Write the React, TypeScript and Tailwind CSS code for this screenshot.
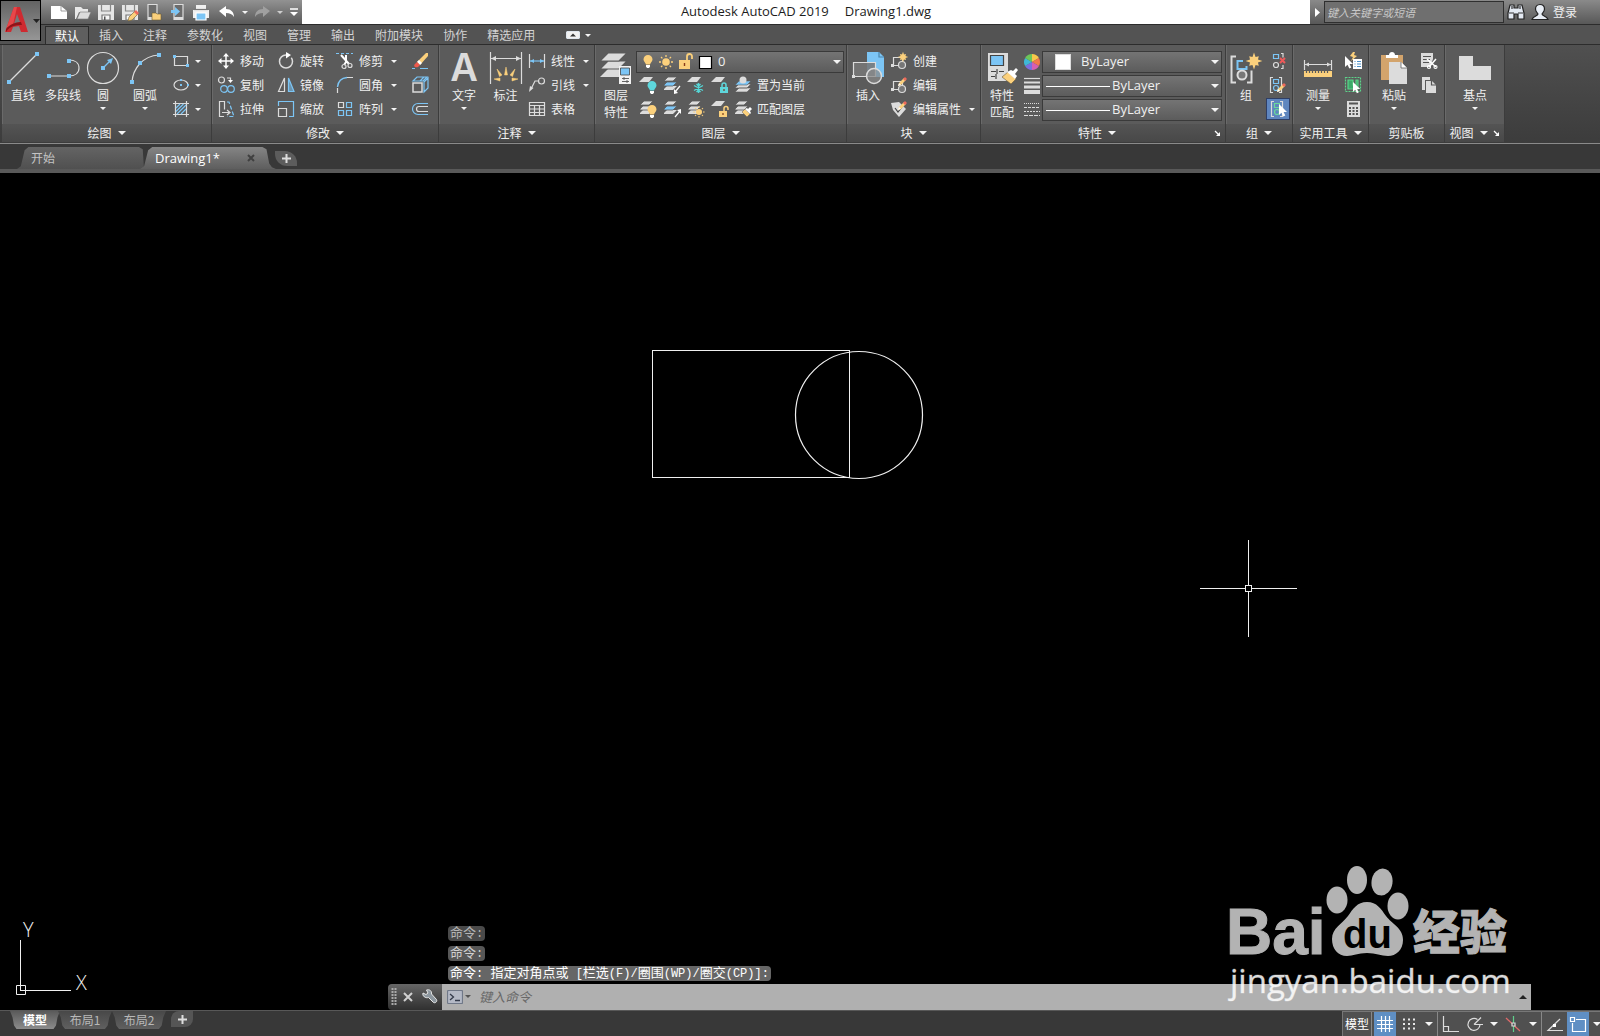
import React from 'react';

/* ---------- icon atoms ---------- */
const G = '#dcdcdc';
const B = '#7cc5f5';
const Y = '#fbd07c';

interface IcProps {
  w?: number;
  h?: number;
  children: React.ReactNode;
}

const Ic = ({ w = 20, h = 20, children }: IcProps) => (
  <svg
    width={w}
    height={h}
    viewBox={`0 0 ${w} ${h}`}
    fill="none"
    stroke={G}
    strokeWidth="1.2"
    className="block shrink-0"
    aria-hidden="true"
  >
    {children}
  </svg>
);

const Caret = ({ big = false }: { big?: boolean }) => (
  <svg
    width={big ? 8 : 6}
    height={big ? 4 : 3}
    viewBox="0 0 8 4"
    className="block shrink-0"
    fill="#f4f4f4"
    aria-hidden="true"
  >
    <path d="M0 0h8L4 4z" />
  </svg>
);

const Sheets = ({ blue = false, x = 0, y = 0 }: { blue?: boolean; x?: number; y?: number }) => (
  <g transform={`translate(${x} ${y})`} stroke="none">
    <path d="M2 13l3-3h10l-4 4H2z" fill={G} />
    <path d="M2 9l3-3h10l-4 4H2z" fill={blue ? B : G} stroke="#5b5b5b" strokeWidth=".8" />
    <path d="M2 5l4-4h9l-4 4H2z" fill={G} stroke="#5b5b5b" strokeWidth=".8" />
  </g>
);

const Sheet = () => <path d="M1 7l5-5h9l-4 5z" fill={G} stroke="none" />;

const Star = ({ x, y, s = 1 }: { x: number; y: number; s?: number }) => (
  <path
    transform={`translate(${x} ${y}) scale(${s})`}
    d="M0-7l1.300 3.700L4-4 3.300-1.300 7 0 3.300 1.300 4 4 1.300 3.300 0 7l-1.300-3.700L-4 4l.7-2.700L-7 0l3.700-1.300L-4-4l2.700.7z"
    fill={Y}
    stroke="none"
  />
);

const Pencil = ({ x, y }: { x: number; y: number }) => (
  <g transform={`translate(${x} ${y})`} stroke="none">
    <path d="M0 9l1-3 5-5 2 2-5 5z" fill={Y} />
    <path d="M5 2l2-2 2 2-2 2z" fill="#ee6a5c" />
    <path d="M0 9l1-3 2 2z" fill="#fff" />
  </g>
);

const Cursor = ({ x, y, s = 1 }: { x: number; y: number; s?: number }) => (
  <path
    transform={`translate(${x} ${y}) scale(${s})`}
    d="M0 0v11l2.500-2.300L4.300 12.500l2-.9-1.700-3.700H8z"
    fill="#fff"
    stroke="none"
  />
);

const Bulb = ({ x, y, c = Y }: { x: number; y: number; c?: string }) => (
  <g transform={`translate(${x} ${y})`} stroke="none">
    <path d="M0-5a4.500 4.500 0 0 1 4.500 4.500C4.500 1.500 2.500 2.500 2 4.500h-4C-2.500 2.500-4.500 1.500-4.500-.5A4.500 4.500 0 0 1 0-5z" fill={c} />
    <path d="M-2 5h4v1.500L1 8h-2l-1-1.500z" fill="#fff" />
  </g>
);

const Sun = ({ x, y, s = 1 }: { x: number; y: number; s?: number }) => (
  <g transform={`translate(${x} ${y}) scale(${s})`}>
    <circle r="3.800" fill={Y} stroke="none" />
    <path
      d="M0-7v2M0 5v2M-7 0h2M5 0h2M-5-5l1.400 1.400M3.600 3.600L5 5M-5 5l1.400-1.400M3.600-3.600L5-5"
      stroke={Y}
      strokeWidth="1.300"
    />
  </g>
);

const Lock = ({ x, y, c = Y, open = false }: { x: number; y: number; c?: string; open?: boolean }) => (
  <g transform={`translate(${x} ${y})`}>
    <path d="M0 4h8v6H0z" fill={c} stroke="none" />
    <path d={open ? 'M5 4V1.500a2 2 0 0 1 4 0V3' : 'M2 4V2a2 2 0 0 1 4 0v2'} stroke={c} strokeWidth="1.500" />
    <path d="M4 6v2" stroke="#7a3b1c" />
  </g>
);

/* ---------- ribbon atoms ---------- */
const Small = ({
  icon,
  label,
  caret,
  title,
}: {
  icon: React.ReactNode;
  label?: string;
  caret?: boolean;
  title?: string;
}) => (
  <button type="button" aria-label={label ?? title} className="flex h-6 items-center gap-1 whitespace-nowrap">
    {icon}
    {label && <span>{label}</span>}
    {caret && (
      <span className={label ? 'ml-1' : ''}>
        <Caret />
      </span>
    )}
  </button>
);

const Big = ({
  icon,
  lines,
  caret,
  width = 'w-10',
}: {
  icon: React.ReactNode;
  lines: string[];
  caret?: boolean;
  width?: string;
}) => (
  <button type="button" className={`flex shrink-0 flex-col items-center ${width}`}>
    <span className="flex h-[37px] items-center">{icon}</span>
    {lines.map((l) => (
      <span key={l} className="block leading-[17px] whitespace-nowrap">
        {l}
      </span>
    ))}
    {caret && (
      <span className="mt-1">
        <Caret />
      </span>
    )}
  </button>
);

const Panel = ({
  title,
  width,
  caret = true,
  launcher,
  children,
}: {
  title: string;
  width: string;
  caret?: boolean;
  launcher?: boolean;
  children: React.ReactNode;
}) => (
  <section
    className={`flex shrink-0 flex-col border-r border-[#3c3c3c] bg-[#5b5b5b] shadow-[inset_1px_0_0_#6a6a6a] ${width}`}
  >
    <div className="flex h-[79px] pt-1">{children}</div>
    <div
      className={`relative flex h-[18px] items-center justify-center gap-[6px] bg-linear-to-b from-[#545454] to-[#484848] ${
        launcher ? 'pr-3' : ''
      }`}
    >
      <span>{title}</span>
      {caret && <Caret big />}
      {launcher && (
        <button type="button" aria-label="对话框" className="absolute right-1">
          <Ic w={7} h={7}>
            <path d="M1 1l4 4" stroke="#fff" />
            <path d="M6 2v4H2z" fill="#fff" stroke="none" />
          </Ic>
        </button>
      )}
    </div>
  </section>
);

const Combo = ({
  label,
  value,
  prefix,
  indent,
}: {
  label: string;
  value: string;
  prefix: React.ReactNode;
  indent: string;
}) => (
  <div className="flex h-[22px] w-full items-center border border-[#3a3a3a] bg-linear-to-b from-[#747474] to-[#5c5c5c] pr-[2px]">
    {prefix}
    <select
      aria-label={label}
      defaultValue={value}
      className={`h-full min-w-0 flex-1 appearance-none bg-transparent font-[Open_Sans] text-[13px] outline-none ${indent}`}
    >
      <option>{value}</option>
    </select>
    <Caret big />
  </div>
);

/* ---------- title bar ---------- */
const QUICK: { name: string; icon: React.ReactNode }[] = [
  {
    name: '新建',
    icon: (
      <Ic>
        <path d="M2 4h10l6 5v8H2z" fill="#fff" stroke="none" />
        <path d="M12 4v5h6" stroke="#888" strokeWidth=".8" />
      </Ic>
    ),
  },
  {
    name: '打开',
    icon: (
      <Ic>
        <path d="M2 5h6l2 2h5v3H6l-3 7H2z" fill="#e8e8e8" stroke="none" />
        <path d="M7 10h11l-3 7H4z" fill={G} stroke="#777" strokeWidth=".6" />
      </Ic>
    ),
  },
  {
    name: '保存',
    icon: (
      <Ic>
        <path d="M2 3h16v15H2z" fill="#e6e6e6" stroke="none" />
        <path d="M5.500 3v6h9V3" stroke="#888" />
        <path d="M6 13h8v5H6z" fill="#f6f6f6" stroke="#777" />
        <path d="M8 14.500h1.500V18H8z" fill="#555" stroke="none" />
      </Ic>
    ),
  },
  {
    name: '另存为',
    icon: (
      <Ic>
        <path d="M2 3h16v15H2z" fill="#e6e6e6" stroke="none" />
        <path d="M5.500 3v6h9V3" stroke="#888" />
        <path d="M6 13h8v5H6z" fill="#f6f6f6" stroke="#777" />
        <g stroke="none">
          <path d="M8 19l1-4 6-6 3 3-6 6z" fill={Y} stroke="#6b5a30" strokeWidth=".6" />
          <path d="M14 10l2-2 3 3-2 2z" fill="#ee6a5c" />
        </g>
      </Ic>
    ),
  },
  {
    name: '从移动设备打开',
    icon: (
      <Ic>
        <path d="M4 2.500h9v15H4z" fill="#6c6c6c" stroke="#ddd" />
        <path d="M4 15h9v3H4z" fill="#ddd" stroke="none" />
        <path d="M8 11h4l1 1h4v6H8z" fill={Y} stroke="#6b5a30" strokeWidth=".6" />
      </Ic>
    ),
  },
  {
    name: '保存到移动设备',
    icon: (
      <Ic>
        <path d="M7 2.500h9v15H7z" fill="#6c6c6c" stroke="#ddd" />
        <path d="M7 15h9v3H7z" fill="#ddd" stroke="none" />
        <path d="M4 8h4V5l5 4.500L8 14v-3H4z" fill={B} stroke="none" />
      </Ic>
    ),
  },
  {
    name: '打印',
    icon: (
      <Ic>
        <path d="M5 3h10v4H5zM2 8h16v8H2z" fill="#f0f0f0" stroke="none" />
        <path d="M5 11h10v7H5z" fill={B} stroke="#fff" />
        <path d="M3 7.500h14" stroke="#777" />
      </Ic>
    ),
  },
];

const TitleBar = () => (
  <div className="flex h-6 bg-white">
    <div className="flex w-[261px] shrink-0 items-center bg-linear-to-b from-[#929292] to-[#5a5a5a] pl-[6px]">
      {QUICK.map((q) => (
        <button key={q.name} type="button" aria-label={q.name} className="flex w-6 justify-center">
          {q.icon}
        </button>
      ))}
      <button type="button" aria-label="放弃" className="ml-[2px] flex w-6 justify-center">
        <Ic>
          <path d="M2 9l7-5v3c5 0 8 3 8 8-2-3-4-4-8-4v4z" fill="#fff" stroke="none" />
        </Ic>
      </button>
      <span className="flex w-3 justify-center">
        <Caret />
      </span>
      <button type="button" aria-label="重做" className="flex w-6 justify-center">
        <Ic>
          <path d="M18 9l-7-5v3c-5 0-8 3-8 8 2-3 4-4 8-4v4z" fill="#a0a0a0" stroke="none" />
        </Ic>
      </button>
      <span className="flex w-3 justify-center opacity-70">
        <Caret />
      </span>
      <button type="button" aria-label="自定义" className="flex w-4 justify-center">
        <Ic w={10} h={10}>
          <path d="M1 2h8" stroke="#fff" strokeWidth="1.500" />
          <path d="M1 5h8L5 9z" fill="#fff" stroke="none" />
        </Ic>
      </button>
    </div>
    <h1 className="flex flex-1 items-center justify-center gap-4 font-[Open_Sans] text-[13px] text-[#1c1c1c]">
      <span>Autodesk AutoCAD 2019</span>
      <span>Drawing1.dwg</span>
    </h1>
    <div className="flex w-[290px] shrink-0 items-center bg-linear-to-b from-[#8a8a8a] to-[#585858]">
      <span className="flex w-[14px] justify-center">
        <Ic w={5} h={9}>
          <path d="M0 0v9l5-4.500z" fill="#fff" stroke="none" />
        </Ic>
      </span>
      <input
        aria-label="搜索"
        placeholder="键入关键字或短语"
        className="h-[22px] w-[180px] border border-[#2f2f2f] bg-[#6f6f6f] px-[2px] text-[11px] italic outline-none placeholder:text-[#c8c8c8]"
      />
      <button type="button" aria-label="查找" className="ml-[3px] flex">
        <Ic w={18} h={18}>
          <path d="M3 2h4v3h4V2h4l2 8v6h-6v-5H7v5H1v-6z" fill="#e3e9f2" stroke="#222" />
          <path d="M2 10h5M11 10h5M5 3v3M13 3v3" stroke="#333" />
        </Ic>
      </button>
      <button type="button" className="ml-[6px] flex items-center gap-1">
        <Ic w={18} h={18}>
          <path
            d="M9 1.500c3 0 4.500 2 4.500 4.500S12 9.500 11 11c0 2 5 2 6 5.500H1C2 13 7 13 7 11 6 9.500 4.500 8.500 4.500 6S6 1.500 9 1.500z"
            fill="#e8edf5"
            stroke="#222"
          />
        </Ic>
        <span>登录</span>
      </button>
    </div>
  </div>
);

const MENUS = ['默认', '插入', '注释', '参数化', '视图', '管理', '输出', '附加模块', '协作', '精选应用'];

const MenuTabs = () => (
  <nav className="flex h-5 items-end border-t border-[#2c2c2c] bg-[#535353] pl-1">
    {MENUS.map((m, i) => (
      <button
        key={m}
        type="button"
        className={
          i === 0
            ? 'h-[18px] border border-b-0 border-[#2c2c2c] bg-[#5f5f5f] px-[9px] leading-[16px] text-white'
            : 'h-[18px] px-[10px] leading-[16px] text-[#d4d4d4]'
        }
      >
        {m}
      </button>
    ))}
    <button type="button" aria-label="最小化功能区" className="ml-[21px] flex h-[18px] items-center gap-[5px]">
      <Ic w={14} h={8}>
        <rect x=".5" y=".5" width="13" height="7" rx="1.500" fill="#f2f2f2" stroke="#dfe6ee" />
        <path d="M4 5.500h6L7 2.500z" fill="#333" stroke="none" />
      </Ic>
      <Caret />
    </button>
  </nav>
);

/* ---------- ribbon ---------- */
const DrawPanel = () => (
  <Panel title="绘图" width="w-[210px]">
    <Big
      lines={['直线']}
      width="ml-px w-10"
      icon={
        <Ic w={34} h={34}>
          <path d="M3 31L31 3" />
          <path d="M1 29h4v4H1zM29 1h4v4h-4z" fill={B} stroke="none" />
        </Ic>
      }
    />
    <Big
      lines={['多段线']}
      icon={
        <Ic w={34} h={34}>
          <path d="M3 25h20M23 9c6 0 10 3 10 8s-4 8-10 8" />
          <path d="M1 23h4v4H1zM21 23h4v4h-4zM21 8h4v4h-4z" fill={B} stroke="none" />
        </Ic>
      }
    />
    <Big
      lines={['圆']}
      caret
      icon={
        <Ic w={34} h={34}>
          <circle cx="17" cy="17" r="15.500" />
          <path d="M17 17l8-8" stroke={B} />
          <path d="M15 15h4v4h-4zM27 7l-2 6-4-4z" fill={B} stroke="none" />
        </Ic>
      }
    />
    <Big
      lines={['圆弧']}
      caret
      width="w-11"
      icon={
        <Ic w={34} h={34}>
          <path d="M4 31C5 18 14 5 31 4" />
          <path d="M2 29h4v4H2zM10 10h4v4h-4zM29 2h4v4h-4z" fill={B} stroke="none" />
        </Ic>
      }
    />
    <div className="ml-1">
      <Small
        title="矩形"
        caret
        icon={
          <Ic>
            <path d="M3.500 5.500h13v9h-13z" />
            <path d="M2 4h3v3H2zM15 13h3v3h-3z" fill={B} stroke="none" />
          </Ic>
        }
      />
      <Small
        title="椭圆"
        caret
        icon={
          <Ic>
            <ellipse cx="10" cy="10" rx="7" ry="5" />
            <path d="M9 9h2v2H9zM9 4h2v2H9zM16 9h2v2h-2z" fill={B} stroke="none" />
          </Ic>
        }
      />
      <Small
        title="图案填充"
        caret
        icon={
          <Ic>
            <path d="M4.500 2v16M15.500 2v16M2 4.500h16M2 15.500h16" />
            <path d="M5 9l4-4M5 12.500L12.500 5M6 15l9-9M10 15l5-5" stroke={B} />
          </Ic>
        }
      />
    </div>
  </Panel>
);

const ModifyPanel = () => (
  <Panel title="修改" width="w-[227px]">
    <div className="grid grid-cols-[60px_59px_75px_20px] content-start pl-1">
      <Small
        label="移动"
        icon={
          <Ic>
            <path d="M10 4v12M4 10h12" stroke="#fff" strokeWidth="1.500" />
            <path d="M10 2l3 3.500H7zM10 18l3-3.500H7zM2 10l3.500-3v6zM18 10l-3.500-3v6z" fill="#fff" stroke="none" />
          </Ic>
        }
      />
      <Small
        label="旋转"
        icon={
          <Ic>
            <path d="M10 4a6.500 6.500 0 1 0 6.500 6.500c0-1.500-.4-2.800-1.200-3.800" strokeWidth="1.500" />
            <path d="M10 1l5 3-5 3.500z" fill="#fff" stroke="none" />
          </Ic>
        }
      />
      <Small
        label="修剪"
        caret
        icon={
          <Ic>
            <path d="M1 2.500h17" stroke={B} strokeDasharray="3 2" />
            <path d="M6 4l8 9M11 4v7l-2 3" stroke="#fff" strokeWidth="2" />
            <circle cx="9" cy="15.500" r="2" />
            <circle cx="15" cy="14.500" r="2" />
          </Ic>
        }
      />
      <Small
        title="删除"
        icon={
          <Ic>
            <path d="M16 2h2v3l-8 9-3-3z" fill={Y} stroke="none" />
            <path d="M9 9l3 3-2 2-3-3z" fill="#fff" stroke="none" />
            <path d="M7 11l3 3-2 2c-3 1-5-1-3-3z" fill="#ee5a4c" stroke="none" />
            <path d="M2 17.500h3M10 17.500h8" stroke={B} />
          </Ic>
        }
      />
      <Small
        label="复制"
        icon={
          <Ic>
            <circle cx="5.500" cy="5" r="3" />
            <path d="M11 3h3.500v3" />
            <path d="M12 5h5l-2.500 3z" fill="#fff" stroke="none" />
            <circle cx="8" cy="14" r="3.300" stroke={B} />
            <circle cx="15" cy="14" r="3.300" stroke={B} />
          </Ic>
        }
      />
      <Small
        label="镜像"
        icon={
          <Ic>
            <path d="M8.500 3v13.500H2.500z" />
            <path d="M12.500 3v13.500h5.500z" stroke={B} fill="#7cc5f588" />
          </Ic>
        }
      />
      <Small
        label="圆角"
        caret
        icon={
          <Ic>
            <path d="M2.500 18v-5M12 2.500h6" />
            <path d="M2.500 12C3 7 6 3 12 2.500" stroke={B} strokeWidth="1.400" />
          </Ic>
        }
      />
      <Small
        title="分解"
        icon={
          <Ic>
            <path d="M3 8h9v9H3z" strokeWidth="1.500" />
            <path d="M3 6l4-4h10l-4 4zM14 7l4-4v10l-4 4zM10 6l4-4" stroke={B} />
          </Ic>
        }
      />
      <Small
        label="拉伸"
        icon={
          <Ic>
            <path d="M8 17.500H3.500v-15h5v8M6 13.500h7M11 11l3 2.500-3 2.500" />
            <path d="M11 3h2l5 14.500H11" stroke={B} strokeDasharray="4 2" />
          </Ic>
        }
      />
      <Small
        label="缩放"
        icon={
          <Ic>
            <path d="M2.500 9.500h8v8h-8z" />
            <path d="M2.500 7V2.500h15v15H13" stroke={B} />
          </Ic>
        }
      />
      <Small
        label="阵列"
        caret
        icon={
          <Ic>
            <path d="M3.500 3.500h5v5h-5z" />
            <path d="M11.500 3.500h5v5h-5zM3.500 11.500h5v5h-5zM11.500 11.500h5v5h-5z" stroke={B} />
          </Ic>
        }
      />
      <Small
        title="偏移"
        icon={
          <Ic>
            <path d="M18 4.500H8a5.500 5.500 0 0 0 0 11h10" stroke={B} />
            <path d="M18 7.500H9a2.500 2.500 0 0 0 0 5h9" />
          </Ic>
        }
      />
    </div>
  </Panel>
);

const AnnotatePanel = () => (
  <Panel title="注释" width="w-[156px]">
    <Big
      lines={['文字']}
      caret
      width="ml-[5px] w-10"
      icon={<span className="font-[Inter] text-[38px] leading-[37px] font-semibold text-[#dcdcdc]">A</span>}
    />
    <Big
      lines={['标注']}
      width="w-[43px]"
      icon={
        <Ic w={34} h={34}>
          <path d="M1.500 1v32M32.500 1v32M2 7.500h30" />
          <path d="M2 7.500l5-2.500v5zM32 7.500l-5-2.500v5z" fill={G} stroke="none" />
          <path
            d="M17 16l1.500 8h-3zM8 18l5 6-2.500 1.500zM26 18l-5 6 2.500 1.500zM5 28l6-1v3zM29 28l-6-1v3z"
            fill={Y}
            stroke={Y}
            strokeWidth=".5"
          />
        </Ic>
      }
    />
    <div>
      <Small
        label="线性"
        caret
        icon={
          <Ic>
            <path d="M2.500 3v14M17.500 3v14" />
            <path d="M3 10h14" stroke={B} />
            <path d="M3 10l4-2v4zM17 10l-4-2v4z" fill={B} stroke="none" />
          </Ic>
        }
      />
      <Small
        label="引线"
        caret
        icon={
          <Ic>
            <circle cx="14.500" cy="6" r="3" />
            <path d="M11.500 6H8l-4 8" />
            <path d="M2 17l1-6 3.500 2z" fill={G} stroke="none" />
          </Ic>
        }
      />
      <Small
        label="表格"
        icon={
          <Ic>
            <path d="M2.500 3.500h15v13h-15zM2.500 6.500h15M2.500 10h15M2.500 13.500h15M7.500 6.500v10M12.500 6.500v10" />
          </Ic>
        }
      />
    </div>
  </Panel>
);

const Snow = () => (
  <path d="M12.500 8v10M8 10.500l9 5M17 10.500l-9 5M10.500 9l2 2 2-2M10.500 17l2-2 2 2" stroke="#55d5d5" strokeWidth="1.400" />
);

const LAYER_TOOLS: { name: string; icon: React.ReactNode }[] = [
  { name: '关闭图层', icon: (<><Sheet /><Bulb x={14} y={11} c="#5ed6dc" /></>) },
  { name: '隔离图层', icon: (<><Sheets blue y={1} /><path d="M18 11l-5 6" stroke="#fff" /><path d="M12 19v-5l4 4z" fill="#fff" stroke="none" /></>) },
  { name: '冻结图层', icon: (<><Sheet /><Snow /></>) },
  { name: '锁定图层', icon: (<><Sheet /><Lock x={10} y={8} c="#5ed6dc" /></>) },
  { name: '打开所有图层', icon: (<><Sheets y={1} /><Bulb x={14} y={11} /></>) },
  { name: '取消隔离', icon: (<><Sheets blue y={1} /><path d="M13 18l5-6" stroke="#fff" /><path d="M19 10v5l-4-4z" fill="#fff" stroke="none" /></>) },
  { name: '解冻所有图层', icon: (<><Sheets y={1} /><Sun x={13} y={13} s={0.8} /></>) },
  { name: '解锁图层', icon: (<><Sheet /><Lock x={9} y={8} open /></>) },
];

const LayerPanel = () => (
  <Panel title="图层" width="w-[252px]">
    <Big
      lines={['图层', '特性']}
      width="ml-px w-10"
      icon={
        <Ic w={34} h={34}>
          <path d="M1 26l8-8h19l-8 8z" fill={G} stroke="none" />
          <path d="M1 18l8-8h19l-8 8z" fill={G} stroke="#5b5b5b" />
          <path d="M1 10l8-8h19l-8 8z" fill={G} stroke="#5b5b5b" />
          <path d="M20 15h12v18H20z" fill="#f2f2f2" stroke="none" />
          <path d="M21.500 17h9v7h-9z" fill={B} stroke="#444" strokeWidth=".8" />
          <path d="M23 27.500h7M23 30.500h7M25 26v3M28 29v3" stroke="#555" strokeWidth=".9" />
        </Ic>
      }
    />
    <div className="flex-1 pr-[2px]">
      <div className="flex h-6 items-center pt-px">
        <Combo
          label="图层"
          value="0"
          indent="pl-[5px]"
          prefix={
            <Ic w={76} h={20}>
              <Bulb x={11} y={8} />
              <Sun x={29} y={10} />
              <g transform="translate(42 0)">
                <path d="M0 8h11v9H0z" fill={Y} stroke="none" />
                <path d="M8 8V4.500a2.500 2.500 0 0 1 5 0V7" stroke={Y} strokeWidth="1.800" />
                <path d="M5.500 11v3" stroke="#8a3a1a" strokeWidth="1.400" />
              </g>
              <path d="M62.500 4.500h12v12h-12z" fill="#fff" stroke="#000" />
            </Ic>
          }
        />
      </div>
      <div className="flex gap-[3px] pl-[2px]">
        <div className="grid grid-cols-4 gap-x-1">
          {LAYER_TOOLS.map((t) => (
            <Small key={t.name} title={t.name} icon={<Ic>{t.icon}</Ic>} />
          ))}
        </div>
        <div>
          <Small
            label="置为当前"
            icon={
              <Ic>
                <path d="M2 17l4-4h12l-4 4zM2 13l4-4h12l-4 4z" fill={G} stroke="#5b5b5b" strokeWidth=".6" />
                <path d="M2 10l4-4h12l-4 4z" fill={B} stroke="#5b5b5b" strokeWidth=".6" />
                <circle cx="10" cy="5" r="3.500" fill={G} stroke="none" />
              </Ic>
            }
          />
          <Small
            label="匹配图层"
            icon={
              <Ic>
                <Sheets y={1} />
                <path d="M9 13l3-3 5 5-3 3z" fill={Y} stroke="#5b5b5b" strokeWidth=".5" />
                <path d="M12 10l2-1 1 1 2-2 2 2-2 2 1 2-1 1z" fill="#fff" stroke="none" />
              </Ic>
            }
          />
        </div>
      </div>
    </div>
  </Panel>
);

const BlockMini = () => (
  <>
    <path d="M4.500 6.500h9v8h-9z" />
    <circle cx="13" cy="14" r="3.500" fill="#777" />
    <path d="M2 13h3v3H2z" fill={G} stroke="none" />
  </>
);

const BlockPanel = () => (
  <Panel title="块" width="w-[134px]">
    <Big
      lines={['插入']}
      width="ml-px w-10"
      icon={
        <Ic w={34} h={34}>
          <path d="M16 1h12l5 5v20H16z" fill={B} stroke="none" />
          <path d="M28 1v5h5" stroke="#4b86ad" />
          <path d="M2.500 11.500h22v14h-22z" fill="#777d" />
          <circle cx="23" cy="25" r="7.500" fill="#888b" strokeWidth="1.500" />
          <path d="M1 24h3v3H1z" fill={G} stroke="none" />
        </Ic>
      }
    />
    <div className="pl-px">
      <Small label="创建" icon={<Ic><BlockMini /><Star x={14} y={6} s={0.75} /></Ic>} />
      <Small label="编辑" icon={<Ic><BlockMini /><Pencil x={9} y={2} /></Ic>} />
      <Small
        label="编辑属性"
        caret
        icon={
          <Ic>
            <path d="M2 4l8-1 7 7-7 8-6-7z" fill={G} stroke="none" />
            <path d="M6 9l3 4 4-5" stroke="#444" />
            <Pencil x={9} y={2} />
          </Ic>
        }
      />
    </div>
  </Panel>
);

const LineSample = () => <span className="ml-[3px] block h-px w-16 bg-white" />;

const PropertyPanel = () => (
  <Panel title="特性" width="w-[245px]" launcher>
    <Big
      lines={['特性', '匹配']}
      width="ml-px w-10"
      icon={
        <Ic w={34} h={34}>
          <path d="M3 2h20v28H3z" fill={G} stroke="none" />
          <path d="M5.500 4.500h13v10h-13z" fill={B} stroke="#444" />
          <path d="M6 20.500h5M14 20.500h5M6 25.500h4M12 18v5M11 23v5" stroke="#444" />
          <path d="M17 26l6-5 8 7-5 5z" fill={Y} stroke="#6a5a3a" strokeWidth=".6" />
          <path d="M22 21l4-2 2 1 3-3 2 2-3 4 2 2-2 3z" fill="#fff" stroke="none" />
        </Ic>
      }
    />
    <div className="pt-px">
      <div className="flex h-6 items-center">
        <Ic>
          <g stroke="none">
            <path d="M10 10V2a8 8 0 0 1 6.900 4z" fill="#f7c84a" />
            <path d="M10 10l6.900-4a8 8 0 0 1 0 8z" fill="#f2784b" />
            <path d="M10 10l6.900 4A8 8 0 0 1 10 18z" fill="#d65fb0" />
            <path d="M10 10v8a8 8 0 0 1-6.900-4z" fill="#7a6fe0" />
            <path d="M10 10l-6.900 4a8 8 0 0 1 0-8z" fill="#3fb8d8" />
            <path d="M10 10L3.100 6A8 8 0 0 1 10 2z" fill="#6cc65a" />
          </g>
        </Ic>
      </div>
      <div className="flex h-6 items-center">
        <Ic>
          <path d="M2 2.500h16" />
          <path d="M2 6.500h16" strokeWidth="2" />
          <path d="M2 11h16" strokeWidth="3" />
          <path d="M2 16h16" strokeWidth="4" />
        </Ic>
      </div>
      <div className="flex h-6 items-center">
        <Ic>
          <path d="M2 3.500h16" strokeDasharray="1 1" />
          <path d="M2 7.500h16" strokeDasharray="3 1" />
          <path d="M2 11.500h16" strokeDasharray="2 1" />
          <path d="M2 15.500h16" strokeDasharray="4 1" />
        </Ic>
      </div>
    </div>
    <div className="flex-1 pt-px pr-[3px]">
      <div className="flex h-6 items-center">
        <Combo
          label="对象颜色"
          value="ByLayer"
          indent="pl-[10px]"
          prefix={<span className="ml-3 block size-4 border border-[#ddd] bg-white" />}
        />
      </div>
      <div className="flex h-6 items-center">
        <Combo label="线宽" value="ByLayer" indent="pl-[2px]" prefix={<LineSample />} />
      </div>
      <div className="flex h-6 items-center">
        <Combo label="线型" value="ByLayer" indent="pl-[2px]" prefix={<LineSample />} />
      </div>
    </div>
  </Panel>
);

const GroupMini = ({ c = B, d = G }: { c?: string; d?: string }) => (
  <>
    <path d="M5 2.500H2.500v15H5M11 2.500h2.500v15H11" stroke={d} />
    <path d="M5.500 4.500h5v4h-5z" stroke={c} />
    <circle cx="8" cy="13" r="2.500" stroke={c} />
  </>
);

const GroupPanel = () => (
  <Panel title="组" width="w-[67px]">
    <Big
      lines={['组']}
      icon={
        <Ic w={36} h={34}>
          <path d="M8 5.500H3.500v26H8M19 31.500h4.500v-12" strokeWidth="2" />
          <path d="M15 10H9.500v8h9v-3" stroke={B} strokeWidth="2" />
          <circle cx="14" cy="24" r="4.500" fill="#777" strokeWidth="2" />
          <Star x={26} y={10} s={1.2} />
        </Ic>
      }
    />
    <div>
      <Small
        title="解除编组"
        icon={
          <Ic w={23}>
            <path d="M7.500 3.500h5v4h-5z" stroke={B} />
            <circle cx="10" cy="14" r="2.500" />
            <path d="M15 2.500h2v4M17 14v3.500h-2" />
            <path d="M14 7l5 5M19 7l-5 5" stroke="#ee5a5a" strokeWidth="2" />
          </Ic>
        }
      />
      <Small title="组编辑" icon={<Ic w={23}><g transform="translate(2 0)"><GroupMini /><Pencil x={9} y={8} /></g></Ic>} />
      <button
        type="button"
        aria-label="启用组选择"
        className="mt-px flex h-[22px] w-[24px] items-center border border-[#2f3f66] bg-[#5f86bf]"
      >
        <Ic w={22}>
          <g transform="translate(2 0)">
            <GroupMini c="#69d99a" />
          </g>
          <Cursor x={12} y={5} />
        </Ic>
      </button>
    </div>
  </Panel>
);

const UtilityPanel = () => (
  <Panel title="实用工具" width="w-[76px]">
    <Big
      lines={['测量']}
      caret
      width="w-[50px]"
      icon={
        <Ic w={30} h={34}>
          <path d="M1.500 9v10M28.500 9v10M2 13.500h26" />
          <path d="M2 13.500l4-2v4zM28 13.500l-4-2v4z" fill={G} stroke="none" />
          <path d="M1 20h28v6H1z" fill={Y} stroke="none" />
          <path d="M3.500 20v2M6.500 20v2M9.500 20v2M12.500 20v2M15.500 20v2M18.500 20v2M21.500 20v2M24.500 20v2" stroke="#5b5b5b" />
        </Ic>
      }
    />
    <div>
      <Small
        title="快速选择"
        icon={
          <Ic>
            <path d="M10 1l-3 4 3 1-2 4 6-5-3-1 1-3z" fill={Y} stroke="none" />
            <path d="M10 8h9v10h-9z" fill="#fff" stroke="none" />
            <path d="M11.500 10.500h1M11.500 13h1M11.500 15.500h1M14 10.500h4M14 13h4M14 15.500h4" stroke="#4a90c8" />
            <Cursor x={2} y={5} />
          </Ic>
        }
      />
      <Small
        title="全部选择"
        icon={
          <Ic>
            <path d="M2.500 2.500h15v14h-15z" stroke="#5cd48a" strokeDasharray="2 1" />
            <path d="M5 5h5v5h3V5h2v9H5z" fill="#3da869" stroke="#5cd48a" />
            <Cursor x={10} y={7} s={0.9} />
          </Ic>
        }
      />
      <Small
        title="快速计算器"
        icon={
          <Ic>
            <path d="M4 2h13v16H4z" fill={G} stroke="none" />
            <path d="M6 4.500h9" stroke="#555" strokeWidth="2" />
            <path d="M6 9h9M6 12h9M6 15h9" stroke="#555" strokeWidth="1.800" strokeDasharray="2 1.500" />
          </Ic>
        }
      />
    </div>
  </Panel>
);

const ClipboardPanel = () => (
  <Panel title="剪贴板" width="w-[76px]" caret={false}>
    <Big
      lines={['粘贴']}
      caret
      width="w-[50px]"
      icon={
        <Ic w={30} h={34}>
          <path d="M2 4h22v25H2z" fill="#d3a46c" stroke="none" />
          <path d="M7 7V4h3c0-4 6-4 6 0h3v3z" fill="#fff" stroke="none" />
          <path d="M10 11h12l6 6v16H10z" fill={G} stroke="none" />
          <path d="M22 11v6h6" fill="#fff" stroke="#666" strokeWidth=".8" />
        </Ic>
      }
    />
    <div>
      <Small
        title="剪切"
        icon={
          <Ic>
            <path d="M2 2h12v6l-3 8H2z" fill={G} stroke="none" />
            <path d="M4 5.500h8M4 8.500h7M4 11.500h6" stroke="#555" />
            <path d="M8 8l9 8M17 8l-7 8" stroke="#fff" strokeWidth="1.500" />
            <circle cx="10" cy="16" r="1.500" stroke="#fff" />
            <circle cx="16.500" cy="16" r="1.500" stroke="#fff" />
          </Ic>
        }
      />
      <Small
        title="复制剪裁"
        icon={
          <Ic>
            <path d="M3 2h8v3H6v10H3z" fill={G} stroke="none" />
            <path d="M7 6h6l4 4v8H7z" fill={G} stroke="none" />
            <path d="M12.500 6v4H17" stroke="#555" />
          </Ic>
        }
      />
    </div>
  </Panel>
);

const ViewPanel = () => (
  <Panel title="视图" width="w-[60px]" launcher>
    <Big
      lines={['基点']}
      caret
      width="w-[60px]"
      icon={
        <Ic w={34} h={34}>
          <path d="M1 5h14v10h18v14H1z" fill={G} stroke="none" />
        </Ic>
      }
    />
  </Panel>
);

/* ---------- drawing tabs ---------- */
const Plus = () => (
  <Ic w={9} h={9}>
    <path d="M4.500 0v9M0 4.500h9" stroke="#ddd" strokeWidth="2" />
  </Ic>
);

const DocTabs = () => (
  <div className="border-b-4 border-[#595959] bg-[#383838] pt-[3px] pl-[17px]">
    <div className="flex h-[22px] text-[#c4c4c4]">
      <button
        type="button"
        className="w-[127px] bg-linear-to-b from-[#646464] to-[#505050] pl-[14px] text-left [clip-path:polygon(0_100%,3%_88%,6%_15%,9%_0,96%_0,99%_10%,100%_100%)]"
      >
        开始
      </button>
      <div className="-ml-1 flex w-[136px] items-center justify-between bg-linear-to-b from-[#858585] to-[#5e5e5e] pr-[21px] pl-[15px] text-white [clip-path:polygon(0_100%,3%_88%,6%_15%,9%_0,90%_0,93%_10%,95%_75%,97%_92%,100%_100%)]">
        <button type="button" className="font-[Open_Sans] text-[13px] leading-[22px]">
          Drawing1*
        </button>
        <button type="button" aria-label="关闭">
          <Ic w={8} h={8}>
            <path d="M1 1l6 6M7 1L1 7" stroke="#404040" strokeWidth="2" />
          </Ic>
        </button>
      </div>
      <button
        type="button"
        aria-label="新图形"
        className="-ml-px mt-1 flex h-[15px] w-[22px] items-center justify-center rounded-tr-xl rounded-bl-xl bg-[#5c5c5c]"
      >
        <Plus />
      </button>
    </div>
  </div>
);

/* ---------- canvas ---------- */
const Model = () => (
  <svg className="absolute inset-0 h-full w-full" fill="none" stroke="#f0f0f0" aria-hidden="true">
    <rect x="652.500" y="177.500" width="197" height="127" />
    <circle cx="859" cy="242" r="63.500" strokeWidth="1.200" />
    <path d="M1248.500 367v45M1248.500 419v45M1200 415.500h45M1252 415.500h45" />
    <rect x="1245.500" y="412.500" width="6" height="6" />
  </svg>
);

const UcsIcon = () => (
  <svg
    width="80"
    height="90"
    viewBox="0 -10 80 90"
    fill="none"
    stroke="#f0f0f0"
    className="absolute bottom-[13px] left-[14px]"
    aria-hidden="true"
  >
    <path d="M6.500 23v51M6 73.500h51M2.500 68.500h9v9h-9z" />
    <g fill="#f0f0f0" stroke="none" fontFamily="Open Sans, sans-serif" fontWeight="300" fontSize="20">
      <text x="9" y="20">Y</text>
      <text x="62" y="73">X</text>
    </g>
  </svg>
);

const Watermark = () => (
  <svg
    width="290"
    height="140"
    viewBox="0 0 290 140"
    className="pointer-events-none absolute right-[85px] bottom-2"
    fill="#b3b3b3"
    aria-hidden="true"
  >
    <text x="1" y="92" fontFamily="Liberation Sans, sans-serif" fontWeight="700" fontSize="64" stroke="#b3b3b3">
      Bai
    </text>
    <ellipse cx="112" cy="38" rx="10.500" ry="13.500" />
    <ellipse cx="132" cy="18" rx="10" ry="14" />
    <ellipse cx="157" cy="20" rx="10.500" ry="13.500" transform="rotate(8 157 20)" />
    <ellipse cx="173" cy="44" rx="10.500" ry="13.500" />
    <path d="M142 40c10 0 14 7 19 14 6 8 17 12 17 24 0 10-7 16-15 16-7 0-12-3-21-3s-14 3-20 3c-9 0-15-7-15-17 0-11 10-15 16-23 5-7 9-14 19-14z" />
    <text x="118" y="86" fontFamily="Liberation Sans, sans-serif" fontWeight="700" fontSize="40" fill="#000">
      du
    </text>
    <text
      x="188"
      y="87"
      fontFamily="Noto Sans CJK SC, sans-serif"
      fontWeight="900"
      fontSize="47"
      stroke="#b3b3b3"
    >
      经验
    </text>
    <text x="5" y="131" fontFamily="Open Sans, sans-serif" fontSize="33" fill="#fff" fillOpacity=".85" stroke="#fff" strokeOpacity=".3">
      jingyan.baidu.com
    </text>
  </svg>
);

const PROMPT = ['命令', ': ', '指定对角点或', ' [', '栏选', '(F)/', '圈围', '(WP)/', '圈交', '(CP)]:'];

const CommandLine = () => (
  <div className="relative mr-[69px] ml-[388px]">
    <ul className="mb-[3px] ml-[60px] flex flex-col items-start gap-[5px] font-[Liberation_Mono,Noto_Sans_CJK_SC,monospace] text-[13px] leading-[15px]">
      <li className="h-[15px] rounded-sm bg-[#4a4a4a] px-[2px] text-[#b4b4b4]">
        命令<span className="text-xs">:</span>
      </li>
      <li className="h-[15px] rounded-sm bg-[#575757] px-[2px] text-[#d0d0d0]">
        命令<span className="text-xs">:</span>
      </li>
      <li className="h-[15px] rounded-sm bg-[#666666] px-[2px] whitespace-pre text-white">
        {PROMPT.map((p, i) => (
          <span key={p} className={i % 2 ? 'text-xs' : ''}>
            {p}
          </span>
        ))}
      </li>
    </ul>
    <div className="flex h-[26px]">
      <div className="flex w-[54px] items-center gap-[6px] rounded-l-sm bg-linear-to-b from-[#666] to-[#303030] pl-[3px]">
        <Ic w={6} h={18}>
          <path d="M1.500 0v18M4.500 0v18" stroke="#aaa" strokeWidth="2" strokeDasharray="2 1" />
        </Ic>
        <button type="button" aria-label="关闭命令行">
          <Ic w={10} h={10}>
            <path d="M1 1l8 8M9 1L1 9" stroke="#d0d0d0" strokeWidth="2" />
          </Ic>
        </button>
        <button type="button" aria-label="自定义命令行" className="ml-[3px]">
          <Ic w={16} h={16}>
            <path
              d="M1 4l3 1.500L6 4 4.500 1c3-1 5.500 1 5 4l5 5.500c1 2-1 4-3 3L6.500 8.500C3.500 9.500 0 7 1 4z"
              fill="#8d979f"
              stroke="#e8e8e8"
              strokeWidth="1"
            />
          </Ic>
        </button>
      </div>
      <div className="flex flex-1 items-center bg-[#b0b0b0] pr-1 pl-[5px]">
        <Ic w={16} h={15}>
          <rect x=".5" y=".5" width="15" height="13" rx="1" fill="#b4b9c6" stroke="#707888" />
          <path d="M3 4l3.500 3L3 10M8 10.500h5" stroke="#333a4a" strokeWidth="1.300" />
        </Ic>
        <Ic w={12} h={8}>
          <path d="M2 2h6L5 5z" fill="#555" stroke="none" />
        </Ic>
        <input
          aria-label="命令"
          placeholder="键入命令"
          className="min-w-0 flex-1 pl-1 text-[13px] text-black italic outline-none placeholder:text-[#686868]"
        />
        <Ic w={8} h={4}>
          <path d="M0 4h8L4 0z" fill="#222" stroke="none" />
        </Ic>
      </div>
    </div>
  </div>
);

/* ---------- status bar ---------- */
const LayoutTab = ({ label, active }: { label: string; active?: boolean }) => (
  <button
    type="button"
    className={`h-[18px] leading-[16px] [clip-path:polygon(0_0,100%_0,95%_35%,92%_80%,87%_100%,13%_100%,8%_80%,5%_35%)] ${
      active
        ? 'w-[50px] bg-linear-to-b from-[#5a5a5a] to-[#8c8c8c] font-bold text-white'
        : 'w-[54px] bg-linear-to-b from-[#484848] to-[#606060] text-[#b8b8b8]'
    }`}
  >
    {label}
  </button>
);

const StatusBtn = ({
  title,
  on,
  width = 'w-6',
  children,
}: {
  title: string;
  on?: boolean;
  width?: string;
  children: React.ReactNode;
}) => (
  <button
    type="button"
    aria-label={title}
    className={`flex h-full shrink-0 items-center justify-center ${width} ${on ? 'bg-[#5f8fc4]' : ''}`}
  >
    {children}
  </button>
);

const StatusBar = () => (
  <footer className="flex h-[26px] justify-between border-t border-[#585858] bg-[#383838]">
    <div className="flex pl-[10px]">
      <LayoutTab label="模型" active />
      <div className="-ml-[2px] flex">
        <LayoutTab label="布局1" />
        <LayoutTab label="布局2" />
      </div>
      <button
        type="button"
        aria-label="新建布局"
        className="ml-[5px] flex h-4 w-[22px] items-center justify-center rounded-tl-lg rounded-br-lg bg-[#555]"
      >
        <Plus />
      </button>
    </div>
    <div className="flex w-[258px] items-stretch overflow-hidden border-t border-l border-[#777] bg-[#505050]">
      <button type="button" className="w-[29px] shrink-0 border-r border-[#888] text-white">
        模型
      </button>
      <span className="w-[2px] shrink-0" />
      <StatusBtn title="栅格" on width="w-[22px]">
        <Ic w={18} h={18}>
          <path d="M5.500 1v16M9.500 1v16M13.500 1v16M1 5.500h16M1 9.500h16M1 13.500h16" stroke="#fff" />
        </Ic>
      </StatusBtn>
      <StatusBtn title="捕捉" width="w-[26px]">
        <Ic w={14} h={14}>
          <path d="M1 2.500h12M1 7h12M1 11.500h12" stroke="#e8e8e8" strokeWidth="2" strokeDasharray="2 3" />
        </Ic>
      </StatusBtn>
      <StatusBtn title="捕捉设置" width="w-[14px]">
        <Caret big />
      </StatusBtn>
      <span className="ml-px w-px shrink-0 bg-[#888]" />
      <StatusBtn title="正交" width="w-[25px]">
        <Ic w={18} h={18}>
          <path d="M1.500 1v15.500H17M1.500 11.500h5v5" />
        </Ic>
      </StatusBtn>
      <StatusBtn title="极轴" width="w-[23px]">
        <Ic w={18} h={18}>
          <path d="M11.500 4.500a6 6 0 1 0 2.500 5M8 9.500h9M8 9.500l7-7" />
        </Ic>
      </StatusBtn>
      <StatusBtn title="极轴设置" width="w-4">
        <Caret big />
      </StatusBtn>
      <StatusBtn title="等轴测" width="w-[22px]">
        <Ic w={18} h={18}>
          <path d="M2 3l14 13" stroke="#e06a6a" />
          <path d="M9.500 1v16" stroke="#5fd08a" />
          <path d="M8 8h3v3H8z" fill="#505050" />
        </Ic>
      </StatusBtn>
      <StatusBtn title="等轴测设置" width="w-[17px]">
        <Caret big />
      </StatusBtn>
      <span className="w-px shrink-0 bg-[#888]" />
      <StatusBtn title="捕捉追踪" width="w-[25px]">
        <Ic w={18} h={18}>
          <path d="M14 4L2 15.500h15" />
          <path d="M7 9h3v3H7z" fill="#fff" stroke="none" />
        </Ic>
      </StatusBtn>
      <StatusBtn title="对象捕捉" on width="w-[22px]">
        <Ic w={18} h={18}>
          <path d="M7 4.500h9.500v12h-13V8" stroke="#fff" />
          <path d="M1.500 2.500h4v4h-4z" stroke="#fff" />
        </Ic>
      </StatusBtn>
      <StatusBtn title="对象捕捉设置" width="w-[16px]">
        <Caret big />
      </StatusBtn>
    </div>
  </footer>
);

/* ---------- main ---------- */
const App = () => (
  <div className="flex h-screen flex-col overflow-hidden bg-black font-[Noto_Sans_CJK_SC,sans-serif] text-xs text-[#f0f0f0]">
    <header className="relative flex bg-[#535353]">
      <button
        type="button"
        aria-label="应用程序菜单"
        className="relative z-10 -mb-1 flex h-[41px] w-[41px] shrink-0 items-center border border-black bg-linear-to-b from-[#636363] to-[#969696]"
      >
        <Ic w={32} h={32}>
          <path d="M4 27L13 2h6l8 25h-7l-2-6-6 1-2 5z" fill="#cf2a30" stroke="none" />
          <path d="M4 27L13 2h3l-4 18c-2 2-5 4-8 7z" fill="#e8474a" stroke="none" />
          <path d="M16 9l3 8-6 2z" fill="#777" stroke="none" />
          <path d="M5 24c3-4 9-7 15-7l1 3c-7 0-12 1-16 7z" fill="#8f1419" stroke="none" />
        </Ic>
        <Ic w={7} h={4}>
          <path d="M0 0h7L3.500 4z" fill="#222" stroke="none" />
        </Ic>
      </button>
      <div className="flex-1">
        <TitleBar />
        <MenuTabs />
      </div>
    </header>

    <div className="flex overflow-hidden border-t border-b border-t-[#2c2c2c] border-b-[#8a8a8a] bg-linear-to-b from-[#505050] to-[#3c3c3c] pb-px pl-[2px]">
      <DrawPanel />
      <ModifyPanel />
      <AnnotatePanel />
      <LayerPanel />
      <BlockPanel />
      <PropertyPanel />
      <GroupPanel />
      <UtilityPanel />
      <ClipboardPanel />
      <ViewPanel />
    </div>

    <DocTabs />

    <main className="relative flex flex-1 flex-col justify-end bg-black">
      <Model />
      <UcsIcon />
      <CommandLine />
      <Watermark />
    </main>

    <StatusBar />
  </div>
);

export default App;
